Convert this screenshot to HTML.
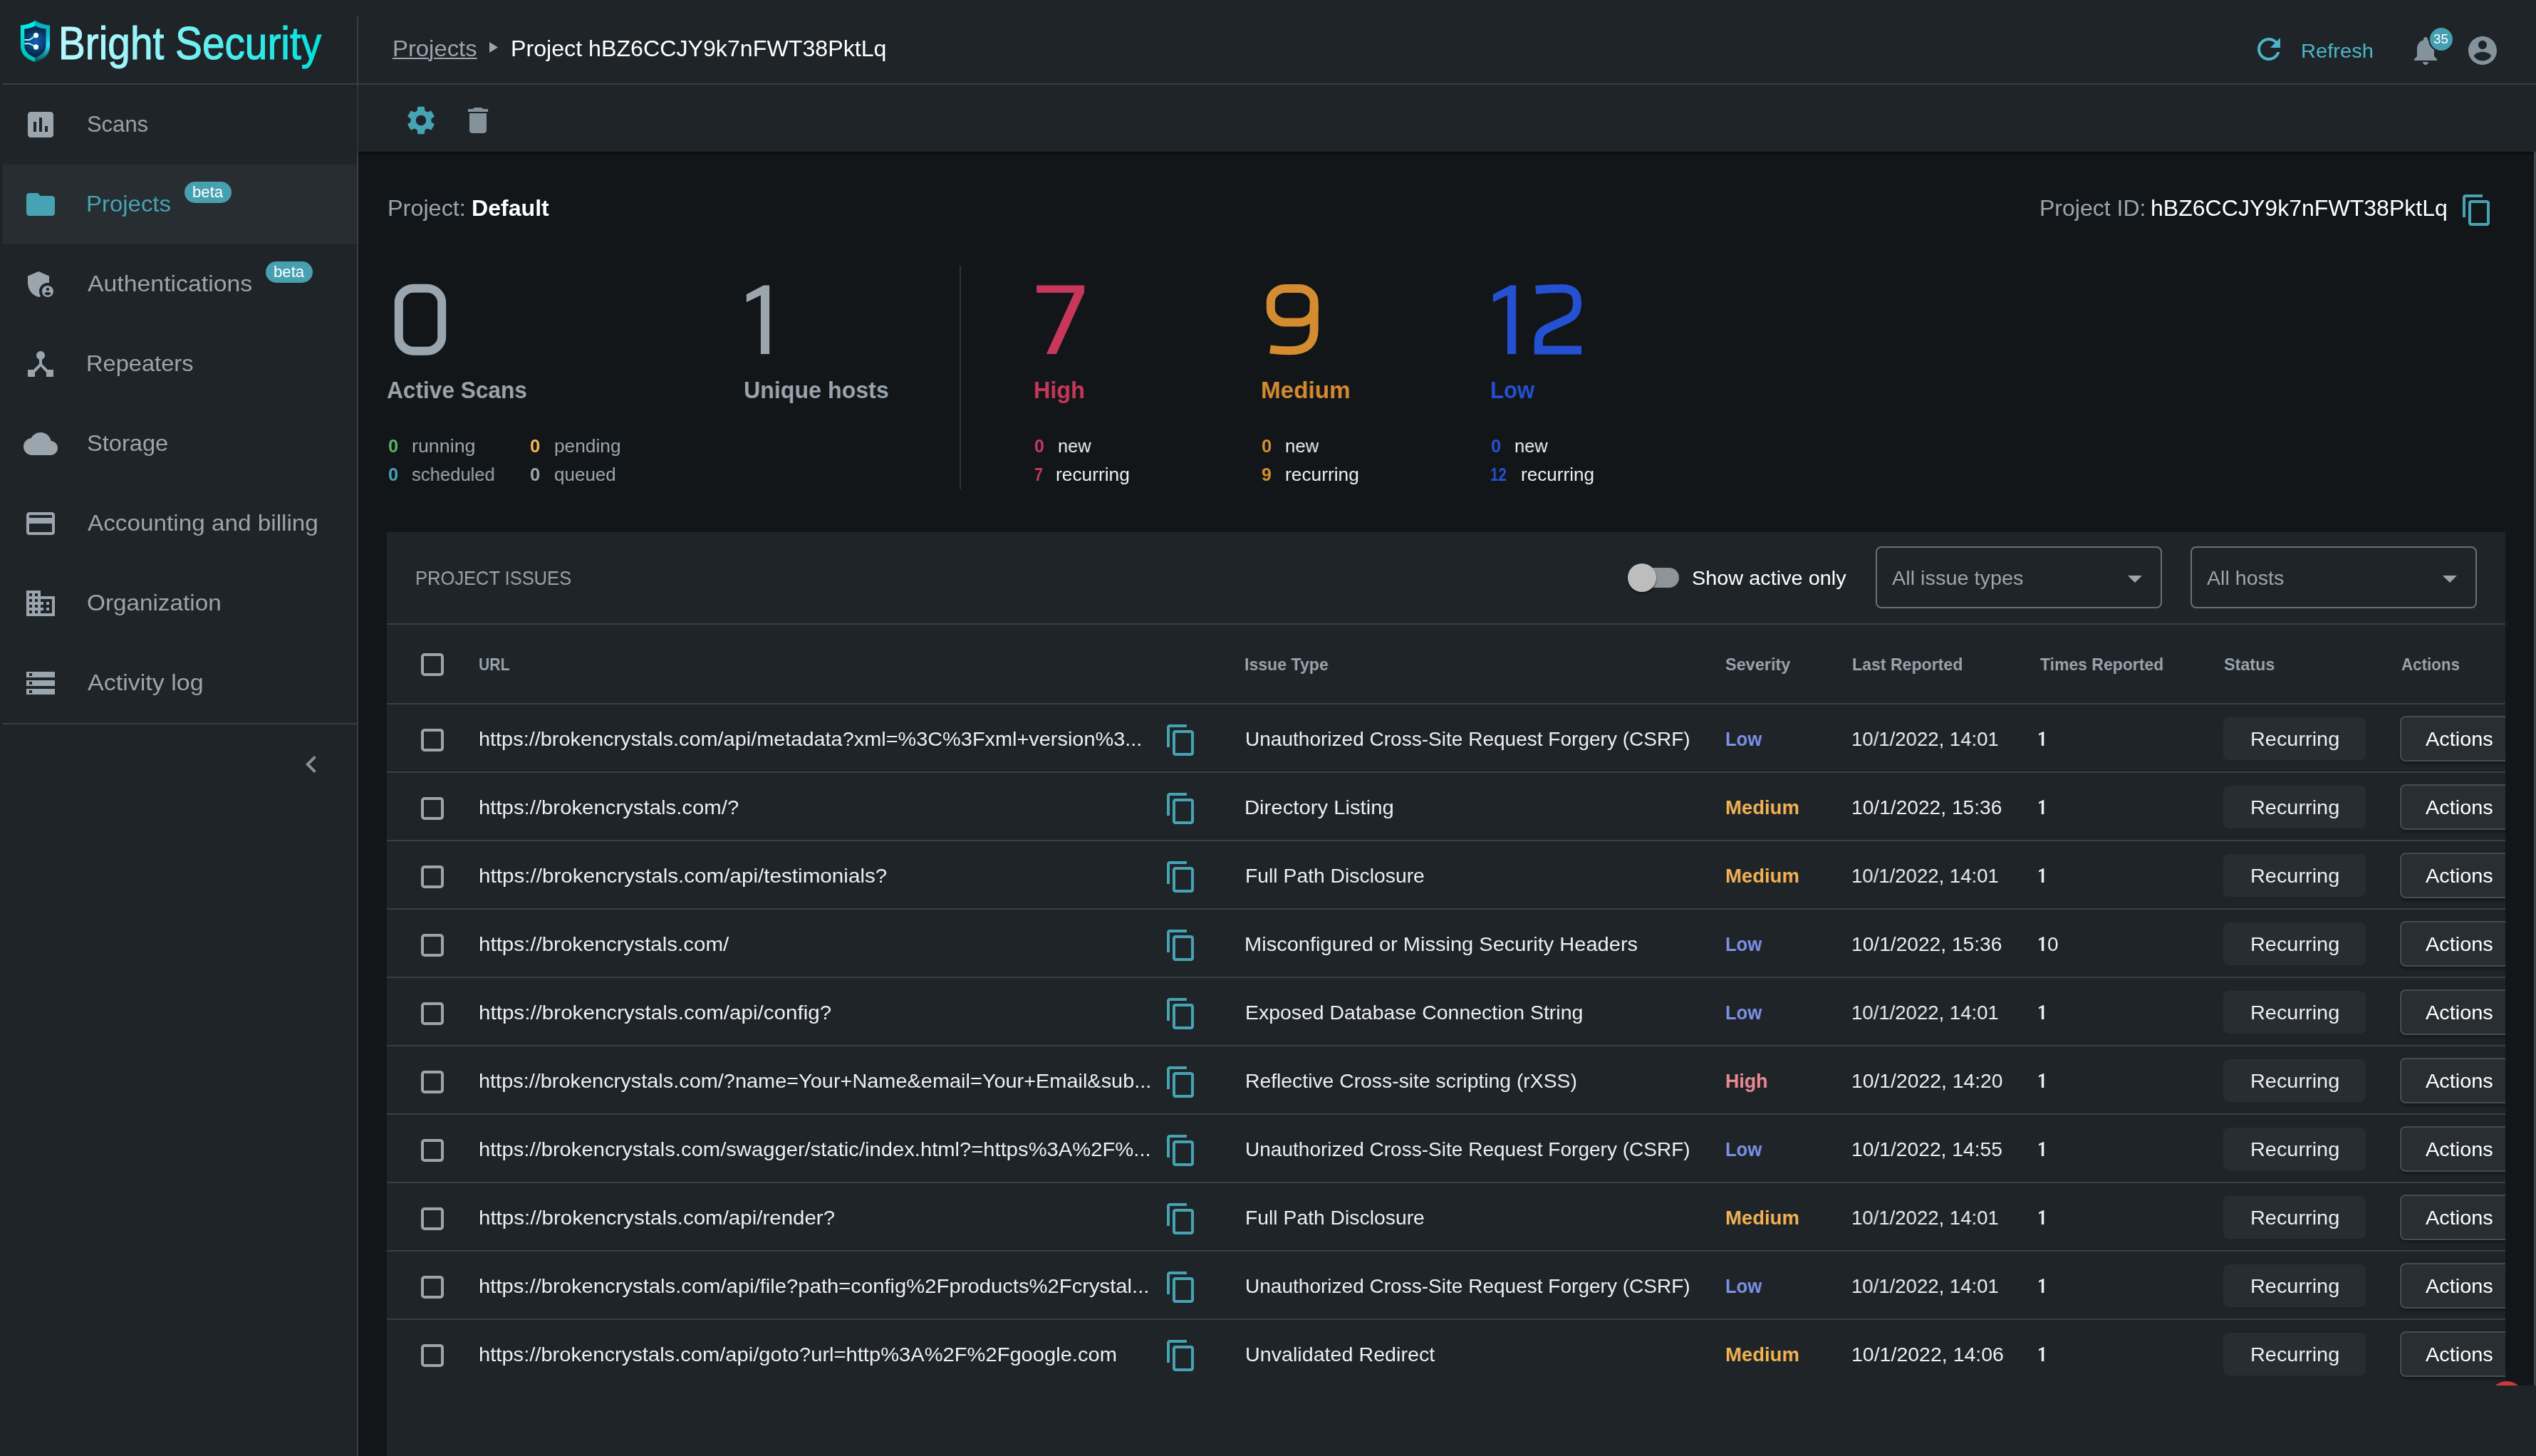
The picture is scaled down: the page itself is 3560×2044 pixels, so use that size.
<!DOCTYPE html>
<html><head><meta charset="utf-8"><title>Bright Security - Project</title><style>
html,body{margin:0;padding:0;background:#131619;}
body{width:3560px;height:2044px;position:relative;overflow:hidden;font-family:"Liberation Sans", sans-serif;}
#r{position:absolute;left:0;top:0;width:3560px;height:2044px;overflow:hidden}
#r>span{will-change:transform}
#r>div,#r>svg,#r>span{position:absolute;box-sizing:content-box}
#r>span{white-space:pre;line-height:1;transform-origin:0 0;display:block}

</style></head><body><div id="r">
<div style="left:0px;top:0px;width:3560px;height:2044px;background:#131619;"></div>
<div style="left:0px;top:0px;width:503px;height:2044px;background:#1f2428;"></div>
<div style="left:501px;top:23px;width:2px;height:2021px;background:#3a3f43;"></div>
<div style="left:503px;top:0px;width:3057px;height:117px;background:#1f2428;"></div>
<div style="left:4px;top:117px;width:3556px;height:2px;background:#3a3f43;"></div>
<div style="left:503px;top:119px;width:3057px;height:94px;background:#1f2428;box-shadow:0 2px 4px rgba(0,0,0,.55)"></div>
<div style="left:3557px;top:213px;width:3px;height:1732px;background:#3d454c;"></div>
<svg style="left:20px;top:20px" width="60" height="76" viewBox="20 20 60 76">
<defs>
<linearGradient id="lgL" x1="0" y1="0" x2="0" y2="1"><stop offset="0" stop-color="#00f2e8"/><stop offset="1" stop-color="#00bdb6"/></linearGradient>
<linearGradient id="lgR" x1="0" y1="0" x2="0" y2="1"><stop offset="0" stop-color="#00b2bd"/><stop offset=".35" stop-color="#08bccb"/><stop offset=".6" stop-color="#2ee0f2"/><stop offset=".78" stop-color="#16a0ac"/><stop offset="1" stop-color="#0a4d58"/></linearGradient>
<radialGradient id="rgI" gradientUnits="userSpaceOnUse" cx="50.5" cy="58" r="24"><stop offset="0" stop-color="#0f62ad"/><stop offset=".45" stop-color="#0b4482"/><stop offset=".8" stop-color="#092548"/><stop offset="1" stop-color="#0a1a30"/></radialGradient>
<clipPath id="cpL"><rect x="20" y="20" width="29.5" height="76"/></clipPath>
<clipPath id="cpR"><rect x="49.5" y="20" width="30.5" height="76"/></clipPath>
</defs>
<path id="sh" d="M49.5 28.500C45 32.500 37 35 28.900 35.500L28.900 63C28.900 77 37 83 49.500 87C62 83 70.100 77 70.100 63L70.100 35.500C62 35 54 32.500 49.500 28.500Z" fill="url(#lgL)" clip-path="url(#cpL)"/>
<path d="M49.5 28.500C45 32.500 37 35 28.900 35.500L28.900 63C28.900 77 37 83 49.500 87C62 83 70.100 77 70.100 63L70.100 35.500C62 35 54 32.500 49.500 28.500Z" fill="url(#lgR)" clip-path="url(#cpR)"/>
<path d="M49.500 36.200C46 38.500 40 40.200 34.300 40.600L34.300 63C34.300 73 41 77.500 49.500 81C58 77.500 64.500 73 64.500 63L64.500 40.600C59 40.200 53 38.500 49.500 36.200Z" fill="url(#rgI)"/>
<path d="M34.300 56.100H41.500L49.500 50.200M34.300 61.200H41.500L49.500 65.300" stroke="#a8f3ee" stroke-width="2" fill="none"/>
<circle cx="50.500" cy="49.600" r="3.600" fill="#f2ffff"/><circle cx="50.500" cy="65.900" r="3.600" fill="#f2ffff"/>
</svg>
<svg style="left:70px;top:20px" width="420" height="95" viewBox="70 20 420 95">
<defs><linearGradient id="lgT" gradientUnits="userSpaceOnUse" x1="0" y1="0" x2="420" y2="0"><stop offset="0" stop-color="#b8f8ff"/><stop offset=".4" stop-color="#8af3f7"/><stop offset=".75" stop-color="#2eeae8"/><stop offset="1" stop-color="#00e0dc"/></linearGradient></defs>
<text transform="translate(82,83) scale(0.887,1)" font-family="Liberation Sans, sans-serif" font-size="64" fill="url(#lgT)" stroke="url(#lgT)" stroke-width="1.1">Bright Security</text>
</svg>
<svg style="left:687px;top:59px" width="12" height="15" viewBox="0 0 12 15"><path d="M0 0 L12 7.500 L0 15Z" fill="#9aa5ae"/></svg>
<svg style="left:3161px;top:45px" width="48" height="48" viewBox="0 0 24 24"><path fill="#4db4cb" d="M17.65 6.35C16.2 4.9 14.21 4 12 4c-4.42 0-7.99 3.58-7.99 8s3.57 8 7.99 8c3.73 0 6.84-2.55 7.73-6h-2.08c-.82 2.33-3.04 4-5.65 4-3.31 0-6-2.69-6-6s2.69-6 6-6c1.66 0 3.14.69 4.22 1.78L13 11h7V4l-2.35 2.35z"/></svg>
<svg style="left:3381px;top:47px" width="48" height="48" viewBox="0 0 24 24"><path fill="#84929c" d="M12 22c1.1 0 2-.9 2-2h-4c0 1.1.89 2 2 2zm6-6v-5c0-3.07-1.64-5.64-4.5-6.32V4c0-.83-.67-1.5-1.5-1.5s-1.5.67-1.5 1.5v.68C7.63 5.36 6 7.92 6 11v5l-2 2v1h16v-1l-2-2z"/></svg>
<div style="left:3411px;top:39px;width:32px;height:32px;border-radius:50%;background:#459fb0;box-shadow:0 0 0 2px #1f2428"></div>
<svg style="left:3461px;top:47px" width="48" height="48" viewBox="0 0 24 24"><path fill="#84929c" d="M12 2C6.48 2 2 6.48 2 12s4.48 10 10 10 10-4.48 10-10S17.520 2 12 2zm0 3c1.660 0 3 1.340 3 3s-1.340 3-3 3-3-1.340-3-3 1.340-3 3-3zm0 14.200c-2.500 0-4.710-1.280-6-3.220.030-1.990 4-3.080 6-3.080 1.990 0 5.970 1.090 6 3.080-1.290 1.940-3.500 3.220-6 3.220z"/></svg>
<svg style="left:567px;top:145px" width="48" height="48" viewBox="0 0 24 24"><path fill="#46a3b4" d="M19.14 12.94c.04-.3.06-.61.06-.94 0-.32-.02-.64-.07-.94l2.03-1.58c.18-.14.23-.41.12-.61l-1.92-3.32c-.12-.22-.37-.29-.59-.22l-2.39.96c-.5-.38-1.03-.7-1.62-.94l-.36-2.54c-.04-.24-.24-.41-.48-.41h-3.84c-.24 0-.43.17-.47.41l-.36 2.54c-.59.24-1.13.57-1.62.94l-2.39-.96c-.22-.08-.47 0-.59.22L2.74 8.87c-.12.21-.08.47.12.61l2.03 1.58c-.05.3-.09.63-.09.94s.02.64.07.94l-2.03 1.58c-.18.14-.23.41-.12.61l1.92 3.32c.12.22.37.29.59.22l2.39-.96c.5.38 1.03.7 1.62.94l.36 2.54c.05.24.24.41.48.41h3.84c.24 0 .44-.17.47-.41l.36-2.54c.59-.24 1.13-.56 1.62-.94l2.39.96c.22.08.47 0 .59-.22l1.92-3.32c.12-.22.07-.47-.12-.61l-2.01-1.58zM12 15.6c-1.98 0-3.6-1.62-3.6-3.6s1.62-3.6 3.6-3.6 3.6 1.62 3.6 3.6-1.62 3.6-3.6 3.6z"/></svg>
<svg style="left:647px;top:145px" width="48" height="48" viewBox="0 0 24 24"><path fill="#84929c" d="M6 19c0 1.1.9 2 2 2h8c1.1 0 2-.9 2-2V7H6v12zM19 4h-3.5l-1-1h-5l-1 1H5v2h14V4z"/></svg>
<div style="left:4px;top:231px;width:497px;height:112px;background:#282d31;"></div>
<svg style="left:33px;top:151px" width="48" height="48" viewBox="0 0 24 24"><path fill="#9aa5ae" d="M19 3H5c-1.1 0-2 .9-2 2v14c0 1.1.9 2 2 2h14c1.1 0 2-.9 2-2V5c0-1.1-.9-2-2-2zM9 17H7v-7h2v7zm4 0h-2V7h2v10zm4 0h-2v-4h2v4z"/></svg>
<svg style="left:33px;top:263px" width="48" height="48" viewBox="0 0 24 24"><path fill="#46a3b4" d="M10 4H4c-1.1 0-1.99.9-1.99 2L2 18c0 1.1.9 2 2 2h16c1.1 0 2-.9 2-2V8c0-1.1-.9-2-2-2h-8l-2-2z"/></svg>
<svg style="left:33px;top:375px" width="48" height="48" viewBox="0 0 24 24"><path fill="#9aa5ae" d="M17 11c.34 0 .67.04 1 .09V6.27L10.5 3 3 6.27v4.91c0 4.54 3.2 8.79 7.5 9.82.55-.13 1.08-.32 1.6-.55-.69-.98-1.1-2.17-1.1-3.45 0-3.31 2.69-6 6-6z M17 13c-2.21 0-4 1.79-4 4s1.79 4 4 4 4-1.79 4-4-1.79-4-4-4zm0 1.38c.62 0 1.12.51 1.12 1.12s-.51 1.12-1.12 1.12-1.12-.51-1.12-1.12.5-1.12 1.12-1.12zm0 5.37c-.93 0-1.74-.46-2.24-1.17.05-.72 1.51-1.08 2.24-1.08s2.19.36 2.24 1.08c-.5.71-1.31 1.17-2.24 1.17z"/></svg>
<svg style="left:33px;top:487px" width="48" height="48" viewBox="0 0 24 24"><path fill="#9aa5ae" d="M17 16l-4-4V8.82C14.16 8.4 15 7.3 15 6c0-1.66-1.34-3-3-3S9 4.34 9 6c0 1.3.84 2.4 2 2.82V12l-4 4H3v5h5v-3.05l4-4.2 4 4.2V21h5v-5h-4z"/></svg>
<svg style="left:33px;top:599px" width="48" height="48" viewBox="0 0 24 24"><path fill="#9aa5ae" d="M19.35 10.04C18.67 6.59 15.64 4 12 4 9.11 4 6.6 5.64 5.35 8.04 2.34 8.36 0 10.91 0 14c0 3.31 2.69 6 6 6h13c2.76 0 5-2.24 5-5 0-2.64-2.05-4.78-4.65-4.96z"/></svg>
<svg style="left:33px;top:711px" width="48" height="48" viewBox="0 0 24 24"><path fill="#9aa5ae" d="M20 4H4c-1.11 0-1.99.89-1.99 2L2 18c0 1.11.89 2 2 2h16c1.11 0 2-.89 2-2V6c0-1.11-.89-2-2-2zm0 14H4v-6h16v6zm0-10H4V6h16v2z"/></svg>
<svg style="left:33px;top:823px" width="48" height="48" viewBox="0 0 24 24"><path fill="#9aa5ae" d="M12 7V3H2v18h20V7H12zM6 19H4v-2h2v2zm0-4H4v-2h2v2zm0-4H4V9h2v2zm0-4H4V5h2v2zm4 12H8v-2h2v2zm0-4H8v-2h2v2zm0-4H8V9h2v2zm0-4H8V5h2v2zm10 12h-8v-2h2v-2h-2v-2h2v-2h-2V9h8v10zm-2-8h-2v2h2v-2zm0 4h-2v2h2v-2z"/></svg>
<svg style="left:33px;top:935px" width="48" height="48" viewBox="0 0 24 24"><path fill="#9aa5ae" d="M2 20h20v-4H2v4zm2-3h2v2H4v-2zM2 4v4h20V4H2zm4 3H4V5h2v2zm-4 7h20v-4H2v4zm2-3h2v2H4v-2z"/></svg>
<div style="left:259px;top:255px;width:66px;height:30px;border-radius:15px;background:#47a0b0"></div>
<div style="left:373px;top:367px;width:66px;height:30px;border-radius:15px;background:#47a0b0"></div>
<div style="left:4px;top:1015px;width:497px;height:2px;background:#3a3f43;"></div>
<svg style="left:413px;top:1049px" width="48" height="48" viewBox="0 0 24 24"><path fill="#84929c" d="M15.41 7.41L14 6l-6 6 6 6 1.41-1.41L10.83 12z"/></svg>
<svg style="left:3453px;top:271px" width="48" height="48" viewBox="0 0 24 24"><path fill="#46a3b4" d="M16 1H4c-1.1 0-2 .9-2 2v14h2V3h12V1zm3 4H8c-1.1 0-2 .9-2 2v14c0 1.100.9 2 2 2h11c1.100 0 2-.9 2-2V7c0-1.100-.9-2-2-2zm0 16H8V7h11v14z"/></svg>
<svg style="left:540px;top:390px" width="100" height="120" viewBox="540 390 100 120"><rect x="559.8" y="404.7" width="60.4" height="88.1" rx="21" ry="20" fill="none" stroke="#9aa5ae" stroke-width="12"/></svg>
<svg style="left:1043px;top:390px" width="44" height="120" viewBox="1043 390 44 120"><polygon points="1071.9,400.5 1080.1,400.5 1080.1,497.1 1067.9,497.1 1067.9,414.6 1047.9,424.2 1047.9,413.2" fill="#9aa5ae"/></svg>
<svg style="left:1445px;top:390px" width="90" height="120" viewBox="1445 390 90 120"><polygon points="1455.2,400.5 1522.1,400.5 1522.1,410.3 1482.9,497.1 1468.9,497.1 1508.1,411.1 1455.2,411.1" fill="#c8375b"/></svg>
<svg style="left:1765px;top:390px" width="100" height="120" viewBox="1765 390 100 120"><rect x="1783.8" y="404.9" width="60.9" height="47.7" rx="21" ry="19" fill="none" stroke="#d58c30" stroke-width="12"/><path d="M1844.7 428 V462 C1844.7 484 1832 492.3 1810 492.3 C1800 492.3 1792 491.6 1783 490.4" fill="none" stroke="#d58c30" stroke-width="12"/></svg>
<svg style="left:2092px;top:390px" width="44" height="120" viewBox="2092 390 44 120"><polygon points="2120.0,400.5 2128.2,400.5 2128.2,497.1 2116.0,497.1 2116.0,414.6 2096.0,424.2 2096.0,413.2" fill="#2450d2"/></svg>
<svg style="left:2140px;top:390px" width="95" height="120" viewBox="2140 390 95 120"><path d="M2155.9 407 C2172 405.2 2184 405 2192 405 C2208 405 2214 411 2214 425 C2214 440 2208 445 2196 450 L2176 459 C2163 465 2159.7 469 2159.7 482 V491.5 H2220" fill="none" stroke="#2450d2" stroke-width="12" stroke-linejoin="miter"/></svg>
<div style="left:1347px;top:373px;width:2px;height:314px;background:#2e3337;"></div>
<div style="left:543px;top:747px;width:2974px;height:1198px;background:#1f2428;"></div>
<div style="left:543px;top:1945px;width:3017px;height:99px;background:#1f2428;"></div>
<div style="left:2291px;top:797px;width:66px;height:28px;border-radius:14px;background:#8f9498"></div>
<div style="left:2285px;top:791px;width:40px;height:40px;border-radius:50%;background:#bdbdbd;box-shadow:0 2px 3px rgba(0,0,0,.5)"></div>
<div style="left:2633px;top:767px;width:398px;height:83px;border:2px solid #6a7075;border-radius:8px"></div>
<svg style="left:2973px;top:788px" width="48" height="48" viewBox="0 0 24 24"><path fill="#9aa5ae" d="M7 10l5 5 5-5z"/></svg>
<div style="left:3075px;top:767px;width:398px;height:83px;border:2px solid #6a7075;border-radius:8px"></div>
<svg style="left:3415px;top:788px" width="48" height="48" viewBox="0 0 24 24"><path fill="#9aa5ae" d="M7 10l5 5 5-5z"/></svg>
<div style="left:543px;top:875px;width:2974px;height:2px;background:#3a3f43;"></div>
<div style="left:591px;top:917px;width:24px;height:24px;border:4px solid #9aa5ae;border-radius:5px"></div>
<div style="left:543px;top:987px;width:2974px;height:2px;background:#3a3f43;"></div>
<div style="left:591px;top:1023px;width:24px;height:24px;border:4px solid #9aa5ae;border-radius:5px"></div>
<svg style="left:1634px;top:1015px" width="48" height="48" viewBox="0 0 24 24"><path fill="#46a3b4" d="M16 1H4c-1.1 0-2 .9-2 2v14h2V3h12V1zm3 4H8c-1.1 0-2 .9-2 2v14c0 1.100.9 2 2 2h11c1.100 0 2-.9 2-2V7c0-1.100-.9-2-2-2zm0 16H8V7h11v14z"/></svg>
<svg style="left:2858px;top:1021px" width="16" height="30" viewBox="2858 1021 16 30"><polygon points="2868.4,1027.0 2869.3,1027.0 2869.3,1047.0 2865.8,1047.0 2865.8,1030.7 2862.1,1032.4 2862.1,1030.1" fill="#eceef0"/></svg>
<div style="left:3121px;top:1007px;width:200px;height:60px;border-radius:8px;background:#282d31"></div>
<div style="left:3369px;top:1005px;width:160px;height:60px;border:2px solid #464c51;border-radius:8px;background:#292e32;box-shadow:0 3px 4px rgba(0,0,0,.35)"></div>
<div style="left:543px;top:1083px;width:2974px;height:2px;background:#3a3f43;"></div>
<div style="left:591px;top:1119px;width:24px;height:24px;border:4px solid #9aa5ae;border-radius:5px"></div>
<svg style="left:1634px;top:1111px" width="48" height="48" viewBox="0 0 24 24"><path fill="#46a3b4" d="M16 1H4c-1.1 0-2 .9-2 2v14h2V3h12V1zm3 4H8c-1.1 0-2 .9-2 2v14c0 1.100.9 2 2 2h11c1.100 0 2-.9 2-2V7c0-1.100-.9-2-2-2zm0 16H8V7h11v14z"/></svg>
<svg style="left:2858px;top:1117px" width="16" height="30" viewBox="2858 1117 16 30"><polygon points="2868.4,1123.0 2869.3,1123.0 2869.3,1143.0 2865.8,1143.0 2865.8,1126.7 2862.1,1128.4 2862.1,1126.1" fill="#eceef0"/></svg>
<div style="left:3121px;top:1103px;width:200px;height:60px;border-radius:8px;background:#282d31"></div>
<div style="left:3369px;top:1101px;width:160px;height:60px;border:2px solid #464c51;border-radius:8px;background:#292e32;box-shadow:0 3px 4px rgba(0,0,0,.35)"></div>
<div style="left:543px;top:1179px;width:2974px;height:2px;background:#3a3f43;"></div>
<div style="left:591px;top:1215px;width:24px;height:24px;border:4px solid #9aa5ae;border-radius:5px"></div>
<svg style="left:1634px;top:1207px" width="48" height="48" viewBox="0 0 24 24"><path fill="#46a3b4" d="M16 1H4c-1.1 0-2 .9-2 2v14h2V3h12V1zm3 4H8c-1.1 0-2 .9-2 2v14c0 1.100.9 2 2 2h11c1.100 0 2-.9 2-2V7c0-1.100-.9-2-2-2zm0 16H8V7h11v14z"/></svg>
<svg style="left:2858px;top:1213px" width="16" height="30" viewBox="2858 1213 16 30"><polygon points="2868.4,1219.0 2869.3,1219.0 2869.3,1239.0 2865.8,1239.0 2865.8,1222.7 2862.1,1224.4 2862.1,1222.1" fill="#eceef0"/></svg>
<div style="left:3121px;top:1199px;width:200px;height:60px;border-radius:8px;background:#282d31"></div>
<div style="left:3369px;top:1197px;width:160px;height:60px;border:2px solid #464c51;border-radius:8px;background:#292e32;box-shadow:0 3px 4px rgba(0,0,0,.35)"></div>
<div style="left:543px;top:1275px;width:2974px;height:2px;background:#3a3f43;"></div>
<div style="left:591px;top:1311px;width:24px;height:24px;border:4px solid #9aa5ae;border-radius:5px"></div>
<svg style="left:1634px;top:1303px" width="48" height="48" viewBox="0 0 24 24"><path fill="#46a3b4" d="M16 1H4c-1.1 0-2 .9-2 2v14h2V3h12V1zm3 4H8c-1.1 0-2 .9-2 2v14c0 1.100.9 2 2 2h11c1.100 0 2-.9 2-2V7c0-1.100-.9-2-2-2zm0 16H8V7h11v14z"/></svg>
<svg style="left:2858px;top:1309px" width="16" height="30" viewBox="2858 1309 16 30"><polygon points="2868.4,1315.0 2869.3,1315.0 2869.3,1335.0 2865.8,1335.0 2865.8,1318.7 2862.1,1320.4 2862.1,1318.1" fill="#eceef0"/></svg>
<div style="left:3121px;top:1295px;width:200px;height:60px;border-radius:8px;background:#282d31"></div>
<div style="left:3369px;top:1293px;width:160px;height:60px;border:2px solid #464c51;border-radius:8px;background:#292e32;box-shadow:0 3px 4px rgba(0,0,0,.35)"></div>
<div style="left:543px;top:1371px;width:2974px;height:2px;background:#3a3f43;"></div>
<div style="left:591px;top:1407px;width:24px;height:24px;border:4px solid #9aa5ae;border-radius:5px"></div>
<svg style="left:1634px;top:1399px" width="48" height="48" viewBox="0 0 24 24"><path fill="#46a3b4" d="M16 1H4c-1.1 0-2 .9-2 2v14h2V3h12V1zm3 4H8c-1.1 0-2 .9-2 2v14c0 1.100.9 2 2 2h11c1.100 0 2-.9 2-2V7c0-1.100-.9-2-2-2zm0 16H8V7h11v14z"/></svg>
<svg style="left:2858px;top:1405px" width="16" height="30" viewBox="2858 1405 16 30"><polygon points="2868.4,1411.0 2869.3,1411.0 2869.3,1431.0 2865.8,1431.0 2865.8,1414.7 2862.1,1416.4 2862.1,1414.1" fill="#eceef0"/></svg>
<div style="left:3121px;top:1391px;width:200px;height:60px;border-radius:8px;background:#282d31"></div>
<div style="left:3369px;top:1389px;width:160px;height:60px;border:2px solid #464c51;border-radius:8px;background:#292e32;box-shadow:0 3px 4px rgba(0,0,0,.35)"></div>
<div style="left:543px;top:1467px;width:2974px;height:2px;background:#3a3f43;"></div>
<div style="left:591px;top:1503px;width:24px;height:24px;border:4px solid #9aa5ae;border-radius:5px"></div>
<svg style="left:1634px;top:1495px" width="48" height="48" viewBox="0 0 24 24"><path fill="#46a3b4" d="M16 1H4c-1.1 0-2 .9-2 2v14h2V3h12V1zm3 4H8c-1.1 0-2 .9-2 2v14c0 1.100.9 2 2 2h11c1.100 0 2-.9 2-2V7c0-1.100-.9-2-2-2zm0 16H8V7h11v14z"/></svg>
<svg style="left:2858px;top:1501px" width="16" height="30" viewBox="2858 1501 16 30"><polygon points="2868.4,1507.0 2869.3,1507.0 2869.3,1527.0 2865.8,1527.0 2865.8,1510.7 2862.1,1512.4 2862.1,1510.1" fill="#eceef0"/></svg>
<div style="left:3121px;top:1487px;width:200px;height:60px;border-radius:8px;background:#282d31"></div>
<div style="left:3369px;top:1485px;width:160px;height:60px;border:2px solid #464c51;border-radius:8px;background:#292e32;box-shadow:0 3px 4px rgba(0,0,0,.35)"></div>
<div style="left:543px;top:1563px;width:2974px;height:2px;background:#3a3f43;"></div>
<div style="left:591px;top:1599px;width:24px;height:24px;border:4px solid #9aa5ae;border-radius:5px"></div>
<svg style="left:1634px;top:1591px" width="48" height="48" viewBox="0 0 24 24"><path fill="#46a3b4" d="M16 1H4c-1.1 0-2 .9-2 2v14h2V3h12V1zm3 4H8c-1.1 0-2 .9-2 2v14c0 1.100.9 2 2 2h11c1.100 0 2-.9 2-2V7c0-1.100-.9-2-2-2zm0 16H8V7h11v14z"/></svg>
<svg style="left:2858px;top:1597px" width="16" height="30" viewBox="2858 1597 16 30"><polygon points="2868.4,1603.0 2869.3,1603.0 2869.3,1623.0 2865.8,1623.0 2865.8,1606.7 2862.1,1608.4 2862.1,1606.1" fill="#eceef0"/></svg>
<div style="left:3121px;top:1583px;width:200px;height:60px;border-radius:8px;background:#282d31"></div>
<div style="left:3369px;top:1581px;width:160px;height:60px;border:2px solid #464c51;border-radius:8px;background:#292e32;box-shadow:0 3px 4px rgba(0,0,0,.35)"></div>
<div style="left:543px;top:1659px;width:2974px;height:2px;background:#3a3f43;"></div>
<div style="left:591px;top:1695px;width:24px;height:24px;border:4px solid #9aa5ae;border-radius:5px"></div>
<svg style="left:1634px;top:1687px" width="48" height="48" viewBox="0 0 24 24"><path fill="#46a3b4" d="M16 1H4c-1.1 0-2 .9-2 2v14h2V3h12V1zm3 4H8c-1.1 0-2 .9-2 2v14c0 1.100.9 2 2 2h11c1.100 0 2-.9 2-2V7c0-1.100-.9-2-2-2zm0 16H8V7h11v14z"/></svg>
<svg style="left:2858px;top:1693px" width="16" height="30" viewBox="2858 1693 16 30"><polygon points="2868.4,1699.0 2869.3,1699.0 2869.3,1719.0 2865.8,1719.0 2865.8,1702.7 2862.1,1704.4 2862.1,1702.1" fill="#eceef0"/></svg>
<div style="left:3121px;top:1679px;width:200px;height:60px;border-radius:8px;background:#282d31"></div>
<div style="left:3369px;top:1677px;width:160px;height:60px;border:2px solid #464c51;border-radius:8px;background:#292e32;box-shadow:0 3px 4px rgba(0,0,0,.35)"></div>
<div style="left:543px;top:1755px;width:2974px;height:2px;background:#3a3f43;"></div>
<div style="left:591px;top:1791px;width:24px;height:24px;border:4px solid #9aa5ae;border-radius:5px"></div>
<svg style="left:1634px;top:1783px" width="48" height="48" viewBox="0 0 24 24"><path fill="#46a3b4" d="M16 1H4c-1.1 0-2 .9-2 2v14h2V3h12V1zm3 4H8c-1.1 0-2 .9-2 2v14c0 1.100.9 2 2 2h11c1.100 0 2-.9 2-2V7c0-1.100-.9-2-2-2zm0 16H8V7h11v14z"/></svg>
<svg style="left:2858px;top:1789px" width="16" height="30" viewBox="2858 1789 16 30"><polygon points="2868.4,1795.0 2869.3,1795.0 2869.3,1815.0 2865.8,1815.0 2865.8,1798.7 2862.1,1800.4 2862.1,1798.1" fill="#eceef0"/></svg>
<div style="left:3121px;top:1775px;width:200px;height:60px;border-radius:8px;background:#282d31"></div>
<div style="left:3369px;top:1773px;width:160px;height:60px;border:2px solid #464c51;border-radius:8px;background:#292e32;box-shadow:0 3px 4px rgba(0,0,0,.35)"></div>
<div style="left:543px;top:1851px;width:2974px;height:2px;background:#3a3f43;"></div>
<div style="left:591px;top:1887px;width:24px;height:24px;border:4px solid #9aa5ae;border-radius:5px"></div>
<svg style="left:1634px;top:1879px" width="48" height="48" viewBox="0 0 24 24"><path fill="#46a3b4" d="M16 1H4c-1.1 0-2 .9-2 2v14h2V3h12V1zm3 4H8c-1.1 0-2 .9-2 2v14c0 1.100.9 2 2 2h11c1.100 0 2-.9 2-2V7c0-1.100-.9-2-2-2zm0 16H8V7h11v14z"/></svg>
<svg style="left:2858px;top:1885px" width="16" height="30" viewBox="2858 1885 16 30"><polygon points="2868.4,1891.0 2869.3,1891.0 2869.3,1911.0 2865.8,1911.0 2865.8,1894.7 2862.1,1896.4 2862.1,1894.1" fill="#eceef0"/></svg>
<div style="left:3121px;top:1871px;width:200px;height:60px;border-radius:8px;background:#282d31"></div>
<div style="left:3369px;top:1869px;width:160px;height:60px;border:2px solid #464c51;border-radius:8px;background:#292e32;box-shadow:0 3px 4px rgba(0,0,0,.35)"></div>
<span style="left:550.9px;top:52px;font-size:32px;font-weight:400;color:#9aa5ae;transform:scaleX(1.0265);text-decoration:underline;text-decoration-thickness:2px;text-underline-offset:2px;">Projects</span>
<span style="left:717.3px;top:52px;font-size:32px;font-weight:400;color:#ffffff;transform:scaleX(1.0054);">Project hBZ6CCJY9k7nFWT38PktLq</span>
<span style="left:3230.4px;top:58px;font-size:28px;font-weight:400;color:#4db4cb;transform:scaleX(1.0400);">Refresh</span>
<span style="left:3415.8px;top:46px;font-size:18px;font-weight:400;color:#ffffff;transform:scaleX(1.0421);">35</span>
<span style="left:122.0px;top:158px;font-size:32px;font-weight:400;color:#9aa5ae;transform:scaleX(0.9667);">Scans</span>
<span style="left:120.9px;top:270px;font-size:32px;font-weight:400;color:#46a3b4;transform:scaleX(1.0292);">Projects</span>
<span style="left:123.0px;top:382px;font-size:32px;font-weight:400;color:#9aa5ae;transform:scaleX(1.0564);">Authentications</span>
<span style="left:121.0px;top:494px;font-size:32px;font-weight:400;color:#9aa5ae;transform:scaleX(1.0193);">Repeaters</span>
<span style="left:122.0px;top:606px;font-size:32px;font-weight:400;color:#9aa5ae;transform:scaleX(1.0191);">Storage</span>
<span style="left:123.0px;top:718px;font-size:32px;font-weight:400;color:#9aa5ae;transform:scaleX(1.0403);">Accounting and billing</span>
<span style="left:122.0px;top:830px;font-size:32px;font-weight:400;color:#9aa5ae;transform:scaleX(1.0397);">Organization</span>
<span style="left:123.0px;top:942px;font-size:32px;font-weight:400;color:#9aa5ae;transform:scaleX(1.0636);">Activity log</span>
<span style="left:270.0px;top:259px;font-size:22px;font-weight:400;color:#ffffff;transform:scaleX(1.0071);">beta</span>
<span style="left:384.0px;top:371px;font-size:22px;font-weight:400;color:#ffffff;transform:scaleX(1.0071);">beta</span>
<span style="left:544.0px;top:276px;font-size:32px;font-weight:400;color:#9aa5ae;transform:scaleX(1.0125);">Project:</span>
<span style="left:662.0px;top:276px;font-size:32px;font-weight:700;color:#ffffff;transform:scaleX(1.0028);">Default</span>
<span style="left:2862.5px;top:276px;font-size:32px;font-weight:400;color:#9aa5ae;transform:scaleX(0.9972);">Project ID:</span>
<span style="left:3019.3px;top:276px;font-size:32px;font-weight:400;color:#ffffff;transform:scaleX(1.0017);">hBZ6CCJY9k7nFWT38PktLq</span>
<span style="left:543.1px;top:530px;font-size:34px;font-weight:700;color:#9aa5ae;transform:scaleX(0.9300);">Active Scans</span>
<span style="left:1043.8px;top:530px;font-size:34px;font-weight:700;color:#9aa5ae;transform:scaleX(0.9462);">Unique hosts</span>
<span style="left:1450.6px;top:530px;font-size:34px;font-weight:700;color:#c8375b;transform:scaleX(0.9514);">High</span>
<span style="left:1769.8px;top:530px;font-size:34px;font-weight:700;color:#d58c30;transform:scaleX(0.9776);">Medium</span>
<span style="left:2092.2px;top:530px;font-size:34px;font-weight:700;color:#2450d2;transform:scaleX(0.9136);">Low</span>
<span style="left:544.5px;top:614px;font-size:25px;font-weight:700;color:#56b464;transform:scaleX(1.0167);">0</span>
<span style="left:578.0px;top:613px;font-size:26px;font-weight:400;color:#9aa5ae;transform:scaleX(1.0321);">running</span>
<span style="left:544.5px;top:654px;font-size:25px;font-weight:700;color:#46a3b4;transform:scaleX(1.0167);">0</span>
<span style="left:578.0px;top:653px;font-size:26px;font-weight:400;color:#9aa5ae;transform:scaleX(0.9853);">scheduled</span>
<span style="left:744.2px;top:614px;font-size:25px;font-weight:700;color:#f5b453;transform:scaleX(1.0250);">0</span>
<span style="left:778.0px;top:613px;font-size:26px;font-weight:400;color:#9aa5ae;transform:scaleX(1.0111);">pending</span>
<span style="left:744.2px;top:654px;font-size:25px;font-weight:700;color:#9aa5ae;transform:scaleX(1.0250);">0</span>
<span style="left:778.0px;top:653px;font-size:26px;font-weight:400;color:#9aa5ae;transform:scaleX(0.9988);">queued</span>
<span style="left:1451.5px;top:614px;font-size:25px;font-weight:700;color:#c8375b;transform:scaleX(0.9833);">0</span>
<span style="left:1484.5px;top:613px;font-size:26px;font-weight:400;color:#eceef0;transform:scaleX(0.9745);">new</span>
<span style="left:1451.6px;top:654px;font-size:25px;font-weight:700;color:#c8375b;transform:scaleX(0.8583);">7</span>
<span style="left:1481.6px;top:653px;font-size:26px;font-weight:400;color:#eceef0;transform:scaleX(1.0120);">recurring</span>
<span style="left:1771.0px;top:614px;font-size:25px;font-weight:700;color:#d58c30;transform:scaleX(1.0250);">0</span>
<span style="left:1803.8px;top:613px;font-size:26px;font-weight:400;color:#eceef0;transform:scaleX(0.9894);">new</span>
<span style="left:1771.0px;top:654px;font-size:25px;font-weight:700;color:#d58c30;transform:scaleX(0.9833);">9</span>
<span style="left:1803.8px;top:653px;font-size:26px;font-weight:400;color:#eceef0;transform:scaleX(1.0120);">recurring</span>
<span style="left:2093.0px;top:614px;font-size:25px;font-weight:700;color:#2450d2;transform:scaleX(1.0250);">0</span>
<span style="left:2126.4px;top:613px;font-size:26px;font-weight:400;color:#eceef0;transform:scaleX(0.9766);">new</span>
<span style="left:2092.2px;top:654px;font-size:25px;font-weight:700;color:#2450d2;transform:scaleX(0.8192);">12</span>
<span style="left:2134.6px;top:653px;font-size:26px;font-weight:400;color:#eceef0;transform:scaleX(1.0050);">recurring</span>
<span style="left:583.2px;top:798px;font-size:28px;font-weight:400;color:#9aa5ae;transform:scaleX(0.9105);">PROJECT ISSUES</span>
<span style="left:2374.8px;top:798px;font-size:28px;font-weight:400;color:#ffffff;transform:scaleX(1.0311);">Show active only</span>
<span style="left:2655.8px;top:798px;font-size:28px;font-weight:400;color:#9aa5ae;transform:scaleX(1.0309);">All issue types</span>
<span style="left:3097.8px;top:798px;font-size:28px;font-weight:400;color:#9aa5ae;transform:scaleX(1.0238);">All hosts</span>
<span style="left:672.1px;top:921px;font-size:24px;font-weight:700;color:#9aa5ae;transform:scaleX(0.8812);">URL</span>
<span style="left:1747.3px;top:921px;font-size:24px;font-weight:700;color:#9aa5ae;transform:scaleX(0.9628);">Issue Type</span>
<span style="left:2421.7px;top:921px;font-size:24px;font-weight:700;color:#9aa5ae;transform:scaleX(0.9783);">Severity</span>
<span style="left:2600.0px;top:921px;font-size:24px;font-weight:700;color:#9aa5ae;transform:scaleX(0.9629);">Last Reported</span>
<span style="left:2863.7px;top:921px;font-size:24px;font-weight:700;color:#9aa5ae;transform:scaleX(0.9572);">Times Reported</span>
<span style="left:3121.9px;top:921px;font-size:24px;font-weight:700;color:#9aa5ae;transform:scaleX(0.9736);">Status</span>
<span style="left:3371.0px;top:921px;font-size:24px;font-weight:700;color:#9aa5ae;transform:scaleX(0.9310);">Actions</span>
<span style="left:671.6px;top:1024px;font-size:28px;font-weight:400;color:#eceef0;transform:scaleX(1.0318);">https://brokencrystals.com/api/metadata?xml=%3C%3Fxml+version%3...</span>
<span style="left:1747.5px;top:1024px;font-size:28px;font-weight:400;color:#eceef0;transform:scaleX(1.0011);">Unauthorized Cross-Site Request Forgery (CSRF)</span>
<span style="left:2421.8px;top:1024px;font-size:28px;font-weight:700;color:#7b93e9;transform:scaleX(0.9148);">Low</span>
<span style="left:2598.6px;top:1024px;font-size:28px;font-weight:400;color:#eceef0;transform:scaleX(0.9841);">10/1/2022, 14:01</span>
<span style="left:3158.9px;top:1024px;font-size:28px;font-weight:400;color:#eceef0;transform:scaleX(1.0314);">Recurring</span>
<span style="left:3405.4px;top:1024px;font-size:28px;font-weight:400;color:#ffffff;transform:scaleX(1.0319);">Actions</span>
<span style="left:671.6px;top:1120px;font-size:28px;font-weight:400;color:#eceef0;transform:scaleX(1.0477);">https://brokencrystals.com/?</span>
<span style="left:1747.4px;top:1120px;font-size:28px;font-weight:400;color:#eceef0;transform:scaleX(1.0447);">Directory Listing</span>
<span style="left:2421.6px;top:1120px;font-size:28px;font-weight:700;color:#f5b453;transform:scaleX(0.9816);">Medium</span>
<span style="left:2598.6px;top:1120px;font-size:28px;font-weight:400;color:#eceef0;transform:scaleX(1.0058);">10/1/2022, 15:36</span>
<span style="left:3158.9px;top:1120px;font-size:28px;font-weight:400;color:#eceef0;transform:scaleX(1.0314);">Recurring</span>
<span style="left:3405.4px;top:1120px;font-size:28px;font-weight:400;color:#ffffff;transform:scaleX(1.0319);">Actions</span>
<span style="left:671.6px;top:1216px;font-size:28px;font-weight:400;color:#eceef0;transform:scaleX(1.0586);">https://brokencrystals.com/api/testimonials?</span>
<span style="left:1747.5px;top:1216px;font-size:28px;font-weight:400;color:#eceef0;transform:scaleX(1.0114);">Full Path Disclosure</span>
<span style="left:2421.6px;top:1216px;font-size:28px;font-weight:700;color:#f5b453;transform:scaleX(0.9816);">Medium</span>
<span style="left:2598.6px;top:1216px;font-size:28px;font-weight:400;color:#eceef0;transform:scaleX(0.9841);">10/1/2022, 14:01</span>
<span style="left:3158.9px;top:1216px;font-size:28px;font-weight:400;color:#eceef0;transform:scaleX(1.0314);">Recurring</span>
<span style="left:3405.4px;top:1216px;font-size:28px;font-weight:400;color:#ffffff;transform:scaleX(1.0319);">Actions</span>
<span style="left:671.6px;top:1312px;font-size:28px;font-weight:400;color:#eceef0;transform:scaleX(1.0550);">https://brokencrystals.com/</span>
<span style="left:1747.4px;top:1312px;font-size:28px;font-weight:400;color:#eceef0;transform:scaleX(1.0374);">Misconfigured or Missing Security Headers</span>
<span style="left:2421.8px;top:1312px;font-size:28px;font-weight:700;color:#7b93e9;transform:scaleX(0.9148);">Low</span>
<span style="left:2598.6px;top:1312px;font-size:28px;font-weight:400;color:#eceef0;transform:scaleX(1.0058);">10/1/2022, 15:36</span>
<span style="left:2873.5px;top:1312px;font-size:28px;font-weight:400;color:#eceef0;transform:scaleX(0.9857);">0</span>
<span style="left:3158.9px;top:1312px;font-size:28px;font-weight:400;color:#eceef0;transform:scaleX(1.0314);">Recurring</span>
<span style="left:3405.4px;top:1312px;font-size:28px;font-weight:400;color:#ffffff;transform:scaleX(1.0319);">Actions</span>
<span style="left:671.6px;top:1408px;font-size:28px;font-weight:400;color:#eceef0;transform:scaleX(1.0571);">https://brokencrystals.com/api/config?</span>
<span style="left:1747.5px;top:1408px;font-size:28px;font-weight:400;color:#eceef0;transform:scaleX(1.0157);">Exposed Database Connection String</span>
<span style="left:2421.8px;top:1408px;font-size:28px;font-weight:700;color:#7b93e9;transform:scaleX(0.9148);">Low</span>
<span style="left:2598.6px;top:1408px;font-size:28px;font-weight:400;color:#eceef0;transform:scaleX(0.9841);">10/1/2022, 14:01</span>
<span style="left:3158.9px;top:1408px;font-size:28px;font-weight:400;color:#eceef0;transform:scaleX(1.0314);">Recurring</span>
<span style="left:3405.4px;top:1408px;font-size:28px;font-weight:400;color:#ffffff;transform:scaleX(1.0319);">Actions</span>
<span style="left:671.6px;top:1504px;font-size:28px;font-weight:400;color:#eceef0;transform:scaleX(1.0325);">https://brokencrystals.com/?name=Your+Name&amp;email=Your+Email&amp;sub...</span>
<span style="left:1747.5px;top:1504px;font-size:28px;font-weight:400;color:#eceef0;transform:scaleX(1.0116);">Reflective Cross-site scripting (rXSS)</span>
<span style="left:2421.7px;top:1504px;font-size:28px;font-weight:700;color:#ee8b92;transform:scaleX(0.9576);">High</span>
<span style="left:2598.6px;top:1504px;font-size:28px;font-weight:400;color:#eceef0;transform:scaleX(1.0111);">10/1/2022, 14:20</span>
<span style="left:3158.9px;top:1504px;font-size:28px;font-weight:400;color:#eceef0;transform:scaleX(1.0314);">Recurring</span>
<span style="left:3405.4px;top:1504px;font-size:28px;font-weight:400;color:#ffffff;transform:scaleX(1.0319);">Actions</span>
<span style="left:671.6px;top:1600px;font-size:28px;font-weight:400;color:#eceef0;transform:scaleX(1.0428);">https://brokencrystals.com/swagger/static/index.html?=https%3A%2F%...</span>
<span style="left:1747.5px;top:1600px;font-size:28px;font-weight:400;color:#eceef0;transform:scaleX(1.0011);">Unauthorized Cross-Site Request Forgery (CSRF)</span>
<span style="left:2421.8px;top:1600px;font-size:28px;font-weight:700;color:#7b93e9;transform:scaleX(0.9148);">Low</span>
<span style="left:2598.6px;top:1600px;font-size:28px;font-weight:400;color:#eceef0;transform:scaleX(1.0082);">10/1/2022, 14:55</span>
<span style="left:3158.9px;top:1600px;font-size:28px;font-weight:400;color:#eceef0;transform:scaleX(1.0314);">Recurring</span>
<span style="left:3405.4px;top:1600px;font-size:28px;font-weight:400;color:#ffffff;transform:scaleX(1.0319);">Actions</span>
<span style="left:671.6px;top:1696px;font-size:28px;font-weight:400;color:#eceef0;transform:scaleX(1.0536);">https://brokencrystals.com/api/render?</span>
<span style="left:1747.5px;top:1696px;font-size:28px;font-weight:400;color:#eceef0;transform:scaleX(1.0114);">Full Path Disclosure</span>
<span style="left:2421.6px;top:1696px;font-size:28px;font-weight:700;color:#f5b453;transform:scaleX(0.9816);">Medium</span>
<span style="left:2598.6px;top:1696px;font-size:28px;font-weight:400;color:#eceef0;transform:scaleX(0.9841);">10/1/2022, 14:01</span>
<span style="left:3158.9px;top:1696px;font-size:28px;font-weight:400;color:#eceef0;transform:scaleX(1.0314);">Recurring</span>
<span style="left:3405.4px;top:1696px;font-size:28px;font-weight:400;color:#ffffff;transform:scaleX(1.0319);">Actions</span>
<span style="left:671.6px;top:1792px;font-size:28px;font-weight:400;color:#eceef0;transform:scaleX(1.0439);">https://brokencrystals.com/api/file?path=config%2Fproducts%2Fcrystal...</span>
<span style="left:1747.5px;top:1792px;font-size:28px;font-weight:400;color:#eceef0;transform:scaleX(1.0011);">Unauthorized Cross-Site Request Forgery (CSRF)</span>
<span style="left:2421.8px;top:1792px;font-size:28px;font-weight:700;color:#7b93e9;transform:scaleX(0.9148);">Low</span>
<span style="left:2598.6px;top:1792px;font-size:28px;font-weight:400;color:#eceef0;transform:scaleX(0.9841);">10/1/2022, 14:01</span>
<span style="left:3158.9px;top:1792px;font-size:28px;font-weight:400;color:#eceef0;transform:scaleX(1.0314);">Recurring</span>
<span style="left:3405.4px;top:1792px;font-size:28px;font-weight:400;color:#ffffff;transform:scaleX(1.0319);">Actions</span>
<span style="left:671.6px;top:1888px;font-size:28px;font-weight:400;color:#eceef0;transform:scaleX(1.0401);">https://brokencrystals.com/api/goto?url=http%3A%2F%2Fgoogle.com</span>
<span style="left:1747.5px;top:1888px;font-size:28px;font-weight:400;color:#eceef0;transform:scaleX(1.0244);">Unvalidated Redirect</span>
<span style="left:2421.6px;top:1888px;font-size:28px;font-weight:700;color:#f5b453;transform:scaleX(0.9816);">Medium</span>
<span style="left:2598.6px;top:1888px;font-size:28px;font-weight:400;color:#eceef0;transform:scaleX(1.0179);">10/1/2022, 14:06</span>
<span style="left:3158.9px;top:1888px;font-size:28px;font-weight:400;color:#eceef0;transform:scaleX(1.0314);">Recurring</span>
<span style="left:3405.4px;top:1888px;font-size:28px;font-weight:400;color:#ffffff;transform:scaleX(1.0319);">Actions</span>
<div style="left:3517px;top:747px;width:40px;height:1198px;background:#131619;"></div>
<div style="left:3494px;top:1939px;width:50px;height:50px;border-radius:50%;background:#d0393b"></div>
<div style="left:3400px;top:1945px;width:160px;height:60px;background:#1f2428;"></div>
</div></body></html>
